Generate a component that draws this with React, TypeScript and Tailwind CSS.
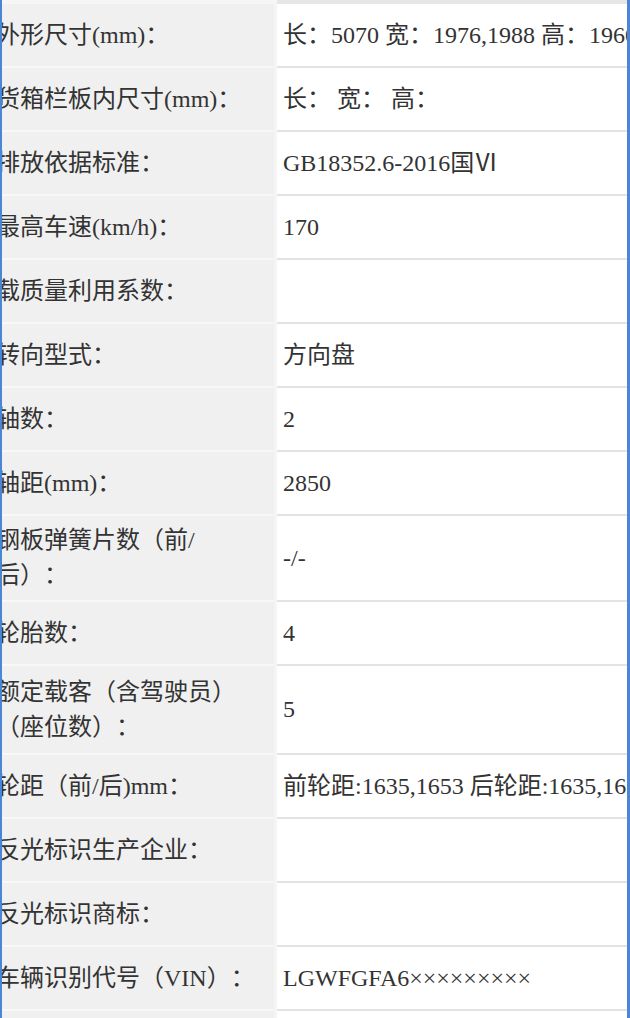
import React from 'react';

const rows = [
  { label: "外形尺寸(mm)：", value: "长：5070 宽：1976,1988 高：1960", h: "h-[64px]" },
  { label: "货箱栏板内尺寸(mm)：", value: "长： 宽： 高：", h: "h-[64px]" },
  { label: "排放依据标准：", value: "GB18352.6-2016国Ⅵ", h: "h-[64px]" },
  { label: "最高车速(km/h)：", value: "170", h: "h-[64px]" },
  { label: "载质量利用系数：", value: "", h: "h-[64px]" },
  { label: "转向型式：", value: "方向盘", h: "h-[64px]" },
  { label: "轴数：", value: "2", h: "h-[64px]" },
  { label: "轴距(mm)：", value: "2850", h: "h-[64px]" },
  { label: "钢板弹簧片数（前/后）：", value: "-/-", h: "h-[86px]" },
  { label: "轮胎数：", value: "4", h: "h-[64px]" },
  { label: "额定载客（含驾驶员）（座位数）：", value: "5", h: "h-[89px]" },
  { label: "轮距（前/后)mm：", value: "前轮距:1635,1653 后轮距:1635,1653", h: "h-[64px]" },
  { label: "反光标识生产企业：", value: "", h: "h-[64px]" },
  { label: "反光标识商标：", value: "", h: "h-[64px]" },
  { label: "车辆识别代号（VIN）：", value: "LGWFGFA6×××××××××", h: "h-[64px]" },
  { label: "", value: "", h: "h-[64px]" },
];

export default function App() {
  return (
    <div
      className="w-[630px] h-[1018px] overflow-hidden bg-white border-l-2 border-r-[3px] border-[#4a86d4] text-[#333] text-[24px] leading-[35px] [text-spacing-trim:space-all]"
      style={{ fontFamily: '"Liberation Serif", "Noto Sans CJK SC", serif' }}
    >
      <div className="flex h-[4px]">
        <div className="w-[275px] bg-[#f6f6f6]" />
        <div className="flex-1 bg-[#e6e6e6]" />
      </div>
      {rows.map((row, i) => (
        <div key={i} className="flex">
          <div className={`w-[272px] ${row.h} flex items-center bg-[#f0f0f0] border-b-2 border-[#f7f7f7] overflow-hidden`}>
            <div className="-ml-[6px] w-[261px] shrink-0">{row.label}</div>
          </div>
          <div className="w-[3px] bg-[#f5f5f5]" />
          <div className={`flex-1 ${row.h} flex items-center pl-[6px] bg-white border-b-2 border-[#e3e3e3] whitespace-nowrap overflow-hidden`}>
            {row.value}
          </div>
        </div>
      ))}
    </div>
  );
}
